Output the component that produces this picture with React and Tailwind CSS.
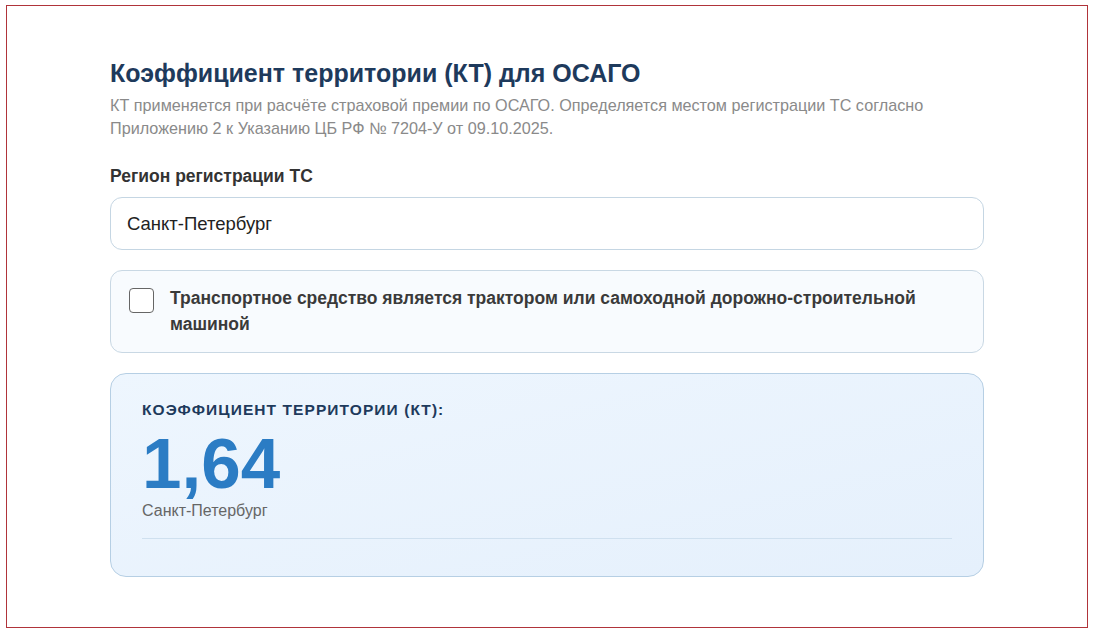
import React, { useState } from 'react';

function App() {
    const [region, setRegion] = useState('Санкт-Петербург');
    const [tractor, setTractor] = useState(false);

    return (
        <div className="bg-white min-h-screen pt-[5px] pl-[6px] font-['Liberation_Sans',Arial,sans-serif]">
            <div className="w-[1082px] h-[623px] border border-[#b0343a] px-[103px] pt-[52px]">
                <h2 className="text-[25px] leading-[30px] font-bold text-[#1e3a5c]">
                    Коэффициент территории (КТ) для ОСАГО
                </h2>
                <p className="mt-[6px] text-[16.2px] leading-[23px] text-[#8a8a8a]">
                    КТ применяется при расчёте страховой премии по ОСАГО. Определяется местом регистрации ТС согласно
                    Приложению 2 к Указанию ЦБ РФ № 7204-У от 09.10.2025.
                </p>

                {/* Region */}
                <label className="block mt-[26px] text-[17.5px] leading-[20px] font-bold text-[#333]">
                    Регион регистрации ТС
                </label>
                <input
                    value={region}
                    onChange={(e) => setRegion(e.target.value)}
                    className="mt-[11px] w-full h-[53px] px-[16px] rounded-[12px] border border-[#c5d6e3] bg-white text-[18.5px] text-[#222] outline-none"
                />

                {/* Tractor checkbox */}
                <label className="mt-[20px] flex items-start gap-[16px] rounded-[12px] border border-[#c9d8e4] bg-[#f8fbfe] pl-[18px] pr-[20px] pt-[14px] pb-[15px] cursor-pointer">
                    <span
                        onClick={() => setTractor(!tractor)}
                        className="mt-[3px] shrink-0 w-[25px] h-[25px] rounded-[4px] border-[1.5px] border-[#666] bg-white flex items-center justify-center"
                    >
                        {tractor && (
                            <svg width="16" height="16" viewBox="0 0 16 16" fill="none">
                                <path d="M3 8.5l3.2 3L13 4.5" stroke="#1e3a5c" strokeWidth="2" />
                            </svg>
                        )}
                    </span>
                    <span className="text-[17.5px] leading-[26px] font-bold text-[#3a3a3a]">
                        Транспортное средство является трактором или самоходной дорожно-строительной машиной
                    </span>
                </label>

                {/* Result */}
                <div className="mt-[20px] rounded-[16px] border border-[#b6cfe4] bg-gradient-to-br from-[#eef6fe] to-[#e5f0fc] px-[31px] pt-[27px] pb-[37px]">
                    <div className="text-[15.5px] leading-[18px] font-bold tracking-[0.07em] text-[#1e3a5c] uppercase">
                        Коэффициент территории (КТ):
                    </div>
                    <div className="mt-[12px] text-[71px] leading-[66px] font-bold text-[#2b7cc4]">
                        {tractor ? '1,00' : '1,64'}
                    </div>
                    <div className="mt-[4px] text-[16px] leading-[20px] text-[#666]">{region}</div>
                    <div className="mt-[17px] border-t border-[#cfe0ef]" />
                </div>
            </div>
        </div>
    );
}

export default App;
